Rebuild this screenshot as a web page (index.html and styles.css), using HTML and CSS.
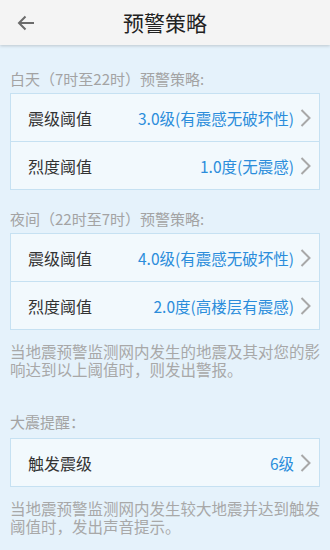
FILE: index.html
```html
<!DOCTYPE html>
<html lang="zh-CN">
<head>
  <meta charset="UTF-8">
  <meta name="viewport" content="width=device-width, initial-scale=1.0">
  <title>预警策略</title>
  <link rel="stylesheet" href="styles.css">
</head>
<body>
  <div class="header">
    <span class="back">
      <svg width="18" height="16" viewBox="0 0 18 16">
        <path d="M17 8H2M8.5 1.5L2 8l6.5 6.5" fill="none" stroke="#6b6b6b" stroke-width="2"/>
      </svg>
    </span>
    <div class="title">预警策略</div>
  </div>

  <div class="content">
    <div class="section-label first">白天（7时至22时）预警策略:</div>
    <div class="card">
      <div class="row">
        <span class="row-name">震级阈值</span>
        <span class="row-value">3.0级(有震感无破坏性)</span>
        <svg class="chevron" width="11" height="18" viewBox="0 0 11 18"><path d="M1.5 1L9.5 9l-8 8" fill="none" stroke="#a8a8a8" stroke-width="2"/></svg>
      </div>
      <div class="row">
        <span class="row-name">烈度阈值</span>
        <span class="row-value">1.0度(无震感)</span>
        <svg class="chevron" width="11" height="18" viewBox="0 0 11 18"><path d="M1.5 1L9.5 9l-8 8" fill="none" stroke="#a8a8a8" stroke-width="2"/></svg>
      </div>
    </div>

    <div class="section-label">夜间（22时至7时）预警策略:</div>
    <div class="card">
      <div class="row">
        <span class="row-name">震级阈值</span>
        <span class="row-value">4.0级(有震感无破坏性)</span>
        <svg class="chevron" width="11" height="18" viewBox="0 0 11 18"><path d="M1.5 1L9.5 9l-8 8" fill="none" stroke="#a8a8a8" stroke-width="2"/></svg>
      </div>
      <div class="row">
        <span class="row-name">烈度阈值</span>
        <span class="row-value">2.0度(高楼层有震感)</span>
        <svg class="chevron" width="11" height="18" viewBox="0 0 11 18"><path d="M1.5 1L9.5 9l-8 8" fill="none" stroke="#a8a8a8" stroke-width="2"/></svg>
      </div>
    </div>
    <p class="desc">当地震预警监测网内发生的地震及其对您的影响达到以上阈值时，则发出警报。</p>

    <div class="section-label big">大震提醒：</div>
    <div class="card">
      <div class="row">
        <span class="row-name">触发震级</span>
        <span class="row-value">6级</span>
        <svg class="chevron" width="11" height="18" viewBox="0 0 11 18"><path d="M1.5 1L9.5 9l-8 8" fill="none" stroke="#a8a8a8" stroke-width="2"/></svg>
      </div>
    </div>
    <p class="desc">当地震预警监测网内发生较大地震并达到触发阈值时，发出声音提示。</p>
  </div>
</body>
</html>
```

FILE: styles.css
```css
html, body {
  margin: 0;
  padding: 0;
  height: 100%;
}
body {
  background-color: #e5f2fb;
  font-family: "Noto Sans CJK SC", "Noto Sans", sans-serif;
  overflow: hidden;
}
.header {
  height: 45px;
  background-color: #f4f4f4;
  box-shadow: 0 1px 3px rgba(0, 0, 0, 0.18);
  display: flex;
  align-items: center;
  justify-content: center;
  position: relative;
}
.back {
  position: absolute;
  left: 17px;
  top: 15px;
  line-height: 0;
}
.title {
  font-size: 21px;
  color: #222;
  line-height: 45px;
}
.content {
  padding: 0 10px;
}
.section-label {
  font-size: 15px;
  color: #a3a3a3;
  line-height: 20px;
  margin-top: 19px;
  margin-bottom: 4px;
}
.section-label.first {
  margin-top: 24px;
}
.section-label.big {
  margin-top: 34px;
  margin-bottom: 6px;
}
.card {
  background-color: #f2f9fd;
  border: 1px solid #c6e1f2;
}
.row {
  height: 47px;
  display: flex;
  align-items: center;
  padding: 0 8px 0 17px;
}
.row + .row {
  border-top: 1px solid #c6e1f2;
}
.row-name {
  flex: 1;
  font-size: 16px;
  color: #333;
}
.row-value {
  font-size: 15.5px;
  color: #2b8ddb;
}
.chevron {
  margin-left: 6px;
  flex-shrink: 0;
}
.desc {
  margin: 13px 0 0 0;
  font-size: 15.5px;
  line-height: 17.5px;
  color: #a8a8a8;
}
```
